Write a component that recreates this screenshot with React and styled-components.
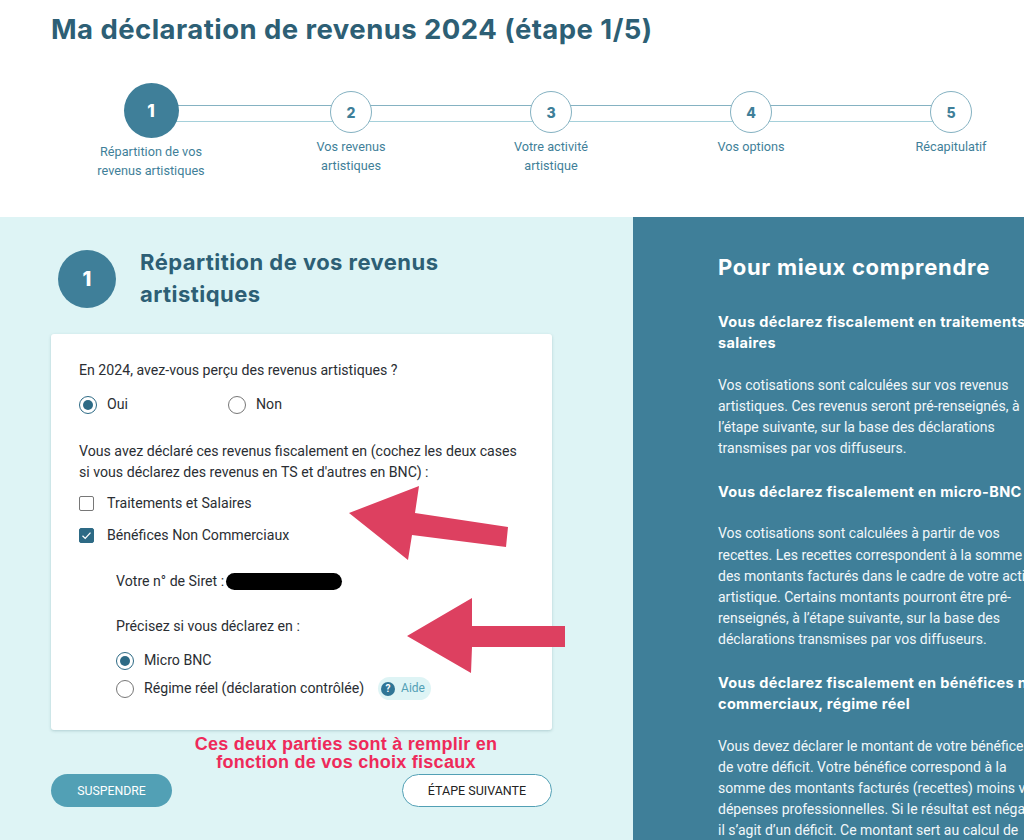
import React from "react";
import styled, { createGlobalStyle } from "styled-components";

const Global = createGlobalStyle`
  html, body { margin: 0; padding: 0; background: #fff; }
  body { font-family: Roboto, "Liberation Sans", sans-serif; overflow: hidden; }
  * { box-sizing: border-box; }
`;

const heading = `Inter, "Open Sans", sans-serif`;

const Page = styled.div`
  width: 1024px;
  height: 840px;
  overflow: hidden;
  display: flex;
  flex-direction: column;
`;
const Header = styled.header`
  height: 217px;
  flex: none;
  padding: 11px 0 0 51px;
`;
const Title = styled.h1`
  margin: 0;
  font: 700 27.5px/36px ${heading};
  letter-spacing: 0.45px;
  color: #2d5f75;
  white-space: nowrap;
`;
const Stepper = styled.ol`
  list-style: none;
  margin: 36px 0 0;
  padding: 0;
  display: grid;
  grid-template-columns: repeat(5, 200px);
`;
const Step = styled.li`
  position: relative;
  display: flex;
  flex-direction: column;
  align-items: center;
  &:not(:last-child)::after {
    content: "";
    position: absolute;
    left: 50%;
    top: 22px;
    width: 200px;
    height: 15px;
    border-top: 1px solid #85b2c2;
    border-bottom: 1px solid #a5d0da;
  }
`;
const StepDot = styled.div`
  position: relative;
  z-index: 1;
  width: ${(p) => (p.$active ? 55 : 42)}px;
  height: ${(p) => (p.$active ? 55 : 42)}px;
  margin-top: ${(p) => (p.$active ? 0 : 8)}px;
  border-radius: 50%;
  display: flex;
  align-items: center;
  justify-content: center;
  font: 800 ${(p) => (p.$active ? 17 : 14)}px ${heading};
  color: ${(p) => (p.$active ? "#fff" : "#3f7f99")};
  background: ${(p) => (p.$active ? "#3f7f99" : "#fff")};
  border: ${(p) => (p.$active ? "none" : "1px solid #85b2c2")};
`;
const StepLabel = styled.div`
  margin-top: 4px;
  font-size: 12.7px;
  line-height: 19px;
  color: #3f7f99;
  text-align: center;
  white-space: nowrap;
`;
const Columns = styled.div`
  flex: 1;
  display: flex;
  min-height: 0;
`;
const Left = styled.section`
  position: relative;
  width: 633px;
  flex: none;
  background: #def4f5;
  padding: 33px 81px 0 51px;
`;
const SectionHead = styled.div`
  display: flex;
  gap: 24px;
  padding-left: 7px;
`;
const SectionDot = styled.div`
  width: 58px;
  height: 58px;
  flex: none;
  border-radius: 50%;
  background: #3f7f99;
  color: #fff;
  font: 800 20px ${heading};
  display: flex;
  align-items: center;
  justify-content: center;
`;
const SectionTitle = styled.h2`
  margin: -4px 0 0;
  font: 700 22px/32px ${heading};
  letter-spacing: 0.45px;
  color: #2d5f75;
  white-space: nowrap;
`;
const Card = styled.div`
  margin-top: 24px;
  height: 396px;
  background: #fff;
  border-radius: 3px;
  box-shadow: 0 1px 3px rgba(70, 120, 130, 0.3);
  padding: 26px 28px 0;
  font-size: 14.15px;
  line-height: 21px;
  color: #2a2e33;
`;
const Text = styled.p`
  margin: ${(p) => p.$top || 0}px 0 0 ${(p) => p.$indent || 0}px;
  white-space: nowrap;
  display: flex;
  align-items: center;
`;
const Paragraph = styled.p`
  margin: ${(p) => p.$top || 0}px 0 0;
  white-space: nowrap;
`;
const OptionRow = styled.div`
  display: flex;
  align-items: center;
  margin: ${(p) => p.$top || 0}px 0 0 ${(p) => p.$indent || 0}px;
  height: 21px;
`;
const Option = styled.label`
  display: flex;
  align-items: center;
  gap: 10px;
  width: ${(p) => (p.$width ? `${p.$width}px` : "auto")};
  white-space: nowrap;
`;
const Radio = styled.span`
  width: 18px;
  height: 18px;
  flex: none;
  border-radius: 50%;
  border: 1.5px solid ${(p) => (p.$on ? "#2d6a85" : "#777")};
  display: flex;
  align-items: center;
  justify-content: center;
  &::after {
    content: "";
    width: 10px;
    height: 10px;
    border-radius: 50%;
    background: ${(p) => (p.$on ? "#2d6a85" : "transparent")};
  }
`;
const Check = styled.span`
  width: 15px;
  height: 15px;
  margin-right: 3px;
  flex: none;
  border-radius: 2px;
  border: 1.5px solid ${(p) => (p.$on ? "#2d6a85" : "#777")};
  background: ${(p) => (p.$on ? "#2d6a85" : "#fff")};
  display: flex;
  align-items: center;
  justify-content: center;
`;
const Redacted = styled.span`
  display: inline-block;
  width: 116px;
  height: 17px;
  margin-left: 2px;
  background: #000;
  border-radius: 9px;
`;
const Help = styled.span`
  display: inline-flex;
  align-items: center;
  gap: 6px;
  height: 23px;
  margin-left: 14px;
  padding: 0 6px 0 3px;
  border-radius: 12px;
  background: #def4f5;
  color: #52a0b5;
  font-size: 12px;
`;
const HelpIcon = styled.span`
  width: 14px;
  height: 14px;
  border-radius: 50%;
  background: #2f7596;
  color: #fff;
  font: 700 10px/14px Roboto, sans-serif;
  text-align: center;
`;
const Note = styled.p`
  width: 320px;
  margin: 5px 0 0 135px;
  text-align: center;
  white-space: nowrap;
  font: 700 18px/18px "Liberation Sans", Arial, sans-serif;
  letter-spacing: 0.25px;
  color: #ee2a5a;
`;
const Actions = styled.div`
  display: flex;
  justify-content: space-between;
  margin-top: 3px;
`;
const PrimaryButton = styled.button`
  width: 121px;
  height: 33px;
  border: none;
  border-radius: 17px;
  background: #52a0b5;
  color: #fff;
  font: 400 12.3px Roboto, sans-serif;
`;
const SecondaryButton = styled.button`
  width: 150px;
  height: 33px;
  border: 1.5px solid #52a0b5;
  border-radius: 17px;
  background: #fff;
  color: #222;
  font: 400 12.5px Roboto, sans-serif;
`;
const Arrow = styled.svg`
  position: absolute;
  left: 0;
  top: 0;
  pointer-events: none;
`;
const Right = styled.aside`
  flex: 1;
  background: #3f7f99;
  color: #fff;
  padding: 36px 0 0 85px;
  white-space: nowrap;
`;
const RightTitle = styled.h2`
  margin: 0 0 30px;
  font: 700 22px/28px ${heading};
  letter-spacing: 0.7px;
`;
const RightSub = styled.h3`
  margin: 0 0 21.5px;
  font: 700 14.5px/21px ${heading};
  letter-spacing: 0.35px;
`;
const RightText = styled.p`
  margin: 0 0 21.5px;
  font-size: 14px;
  line-height: 21.2px;
  color: #f2f7f9;
`;

const steps = [
  ["Répartition de vos", "revenus artistiques"],
  ["Vos revenus", "artistiques"],
  ["Votre activité", "artistique"],
  ["Vos options"],
  ["Récapitulatif"],
];

const Lines = ({ items }) =>
  items.map((l, i) => (
    <React.Fragment key={i}>
      {i > 0 && <br />}
      {l}
    </React.Fragment>
  ));

export default function App() {
  return (
    <Page>
      <Global />
      <Header>
        <Title>Ma déclaration de revenus 2024 (étape 1/5)</Title>
        <Stepper>
          {steps.map((s, i) => (
            <Step key={i}>
              <StepDot $active={i === 0}>{i + 1}</StepDot>
              <StepLabel>
                <Lines items={s} />
              </StepLabel>
            </Step>
          ))}
        </Stepper>
      </Header>
      <Columns>
        <Left>
          <SectionHead>
            <SectionDot>1</SectionDot>
            <SectionTitle>
              Répartition de vos revenus
              <br />
              artistiques
            </SectionTitle>
          </SectionHead>
          <Card>
            <Text>En 2024, avez-vous perçu des revenus artistiques ?</Text>
            <OptionRow $top={13}>
              <Option $width={149}>
                <Radio $on />
                Oui
              </Option>
              <Option>
                <Radio />
                Non
              </Option>
            </OptionRow>
            <Paragraph $top={26}>
              Vous avez déclaré ces revenus fiscalement en (cochez les deux cases
              <br />
              si vous déclarez des revenus en TS et d'autres en BNC) :
            </Paragraph>
            <OptionRow $top={10}>
              <Option>
                <Check />
                Traitements et Salaires
              </Option>
            </OptionRow>
            <OptionRow $top={11}>
              <Option>
                <Check $on>
                  <svg width="11" height="11" viewBox="0 0 11 11" fill="none">
                    <path d="M1.5 5.8 4.2 8.4 9.5 2.6" stroke="#fff" strokeWidth="1.3" />
                  </svg>
                </Check>
                Bénéfices Non Commerciaux
              </Option>
            </OptionRow>
            <Text $top={25} $indent={37}>
              Votre n° de Siret :<Redacted />
            </Text>
            <Text $top={24} $indent={37}>Précisez si vous déclarez en :</Text>
            <OptionRow $top={13} $indent={37}>
              <Option>
                <Radio $on />
                Micro BNC
              </Option>
            </OptionRow>
            <OptionRow $top={7} $indent={37}>
              <Option>
                <Radio />
                Régime réel (déclaration contrôlée)
              </Option>
              <Help>
                <HelpIcon>?</HelpIcon>
                Aide
              </Help>
            </OptionRow>
          </Card>
          <Note>
            Ces deux parties sont à remplir en
            <br />
            fonction de vos choix fiscaux
          </Note>
          <Actions>
            <PrimaryButton>SUSPENDRE</PrimaryButton>
            <SecondaryButton>ÉTAPE SUIVANTE</SecondaryButton>
          </Actions>
          <Arrow width="633" height="623" viewBox="0 217 633 623">
            <polygon fill="#dd4060" points="349,513 419,486 415,513 508,527 506,547 412,535 408,560" />
            <polygon fill="#dd4060" points="407,636 472,598 472,626 565,626 565,647 472,647 471,673" />
          </Arrow>
        </Left>
        <Right>
          <RightTitle>Pour mieux comprendre</RightTitle>
          <RightSub>
            Vous déclarez fiscalement en traitements et
            <br />
            salaires
          </RightSub>
          <RightText>
            <Lines
              items={[
                "Vos cotisations sont calculées sur vos revenus",
                "artistiques. Ces revenus seront pré-renseignés, à",
                "l’étape suivante, sur la base des déclarations",
                "transmises par vos diffuseurs.",
              ]}
            />
          </RightText>
          <RightSub>Vous déclarez fiscalement en micro-BNC</RightSub>
          <RightText>
            <Lines
              items={[
                "Vos cotisations sont calculées à partir de vos",
                "recettes. Les recettes correspondent à la somme",
                "des montants facturés dans le cadre de votre activité",
                "artistique. Certains montants pourront être pré-",
                "renseignés, à l’étape suivante, sur la base des",
                "déclarations transmises par vos diffuseurs.",
              ]}
            />
          </RightText>
          <RightSub>
            Vous déclarez fiscalement en bénéfices non
            <br />
            commerciaux, régime réel
          </RightSub>
          <RightText>
            <Lines
              items={[
                "Vous devez déclarer le montant de votre bénéfice ou",
                "de votre déficit. Votre bénéfice correspond à la",
                "somme des montants facturés (recettes) moins vos",
                "dépenses professionnelles. Si le résultat est négatif,",
                "il s’agit d’un déficit. Ce montant sert au calcul de",
              ]}
            />
          </RightText>
        </Right>
      </Columns>
    </Page>
  );
}
